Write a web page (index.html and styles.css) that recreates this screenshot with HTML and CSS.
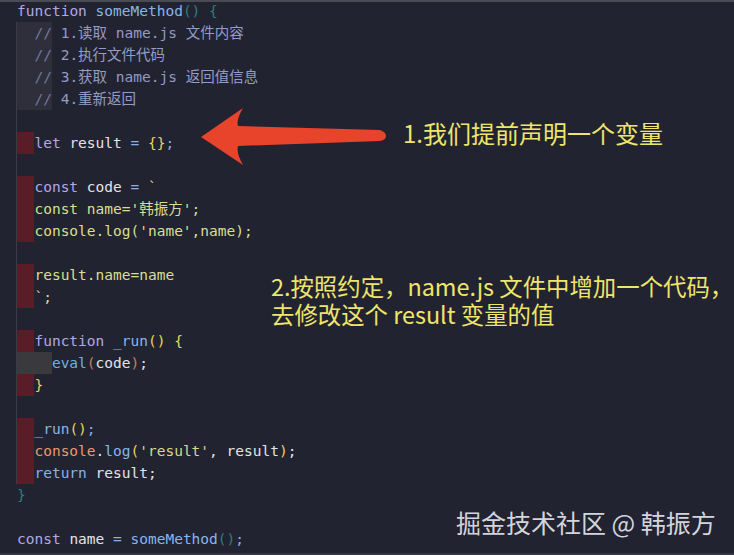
FILE: index.html
```html
<!DOCTYPE html>
<html lang="zh">
<head>
<meta charset="utf-8">
<title>someMethod</title>
<link rel="stylesheet" href="styles.css">
</head>
<body>
<div class="screen">
  <div class="code">
    <div class="line top"><span class="kw">function</span> <span class="fn">someMethod</span><span class="dim">() {</span></div>
    <div class="body">
      <div class="line"><span class="ind gray"></span><span class="cm gray">//</span><span class="ct"> 1.读取 name.js 文件内容</span></div>
      <div class="line"><span class="ind gray"></span><span class="cm gray">//</span><span class="ct"> 2.执行文件代码</span></div>
      <div class="line"><span class="ind gray"></span><span class="cm gray">//</span><span class="ct"> 3.获取 name.js 返回值信息</span></div>
      <div class="line"><span class="ind gray"></span><span class="cm gray">//</span><span class="ct"> 4.重新返回</span></div>
      <div class="line"></div>
      <div class="line"><span class="ind err"></span><span class="kw">let</span> <span class="id">result</span> <span class="op">=</span> <span class="yl">{}</span><span class="op">;</span></div>
      <div class="line"></div>
      <div class="line"><span class="ind err"></span><span class="kw">const</span> <span class="id">code</span> <span class="op">=</span> <span class="str">`</span></div>
      <div class="line"><span class="ind err"></span><span class="str">const name='韩振方';</span></div>
      <div class="line"><span class="ind err"></span><span class="str">console.log('name',name);</span></div>
      <div class="line"></div>
      <div class="line"><span class="ind err"></span><span class="str">result.name=name</span></div>
      <div class="line"><span class="ind err"></span><span class="str">`;</span></div>
      <div class="line"></div>
      <div class="line"><span class="ind err"></span><span class="kw">function</span> <span class="fn">_run</span><span class="yl">() {</span></div>
      <div class="line"><span class="ind2 grey2"></span><span class="fn2">eval</span><span class="or">(</span><span class="id">code</span><span class="or">)</span><span class="id">;</span></div>
      <div class="line"><span class="ind err"></span><span class="yl">}</span></div>
      <div class="line"></div>
      <div class="line"><span class="ind err"></span><span class="fn">_run</span><span class="yl">()</span><span class="op">;</span></div>
      <div class="line"><span class="ind err"></span><span class="cn">console</span><span class="id">.</span><span class="fn">log</span><span class="yl">(</span><span class="s2">'result'</span><span class="id">, result</span><span class="yl">)</span><span class="id">;</span></div>
      <div class="line"><span class="ind err"></span><span class="ret">return</span> <span class="id">result;</span></div>
    </div>
    <div class="line top"><span class="dim">}</span></div>
    <div class="line top"></div>
    <div class="line top"><span class="kw">const</span> <span class="id">name</span> <span class="op">=</span> <span class="fn">someMethod</span><span class="dim">()</span><span class="op">;</span></div>
  </div>

  <svg class="arrow" width="200" height="70" viewBox="0 0 200 70">
    <path d="M1 30 L43 1 Q36 13 38 19 L180 23 Q186 25 186 29 Q186 33 180 34 L38 39 Q36 46 43 58 Z" fill="#e8432b"/>
  </svg>
  <div class="note note1">1.我们提前声明一个变量</div>
  <div class="note note2">2.按照约定，name.js 文件中增加一个代码，<br>去修改这个 result 变量的值</div>
  <div class="mark">掘金技术社区 @ 韩振方</div>
  <div class="bottom-strip"></div>
</div>
</body>
</html>
```

FILE: styles.css
```css
html, body {
  margin: 0;
  padding: 0;
  background: #222331;
}
.screen {
  position: relative;
  width: 734px;
  height: 555px;
  overflow: hidden;
  background: #222331;
  border-top: 2px solid #4a4b55;
  box-sizing: border-box;
}
.code {
  font-family: "DejaVu Sans Mono", "Noto Sans CJK SC", monospace;
  font-size: 14.5px;
  color: #e2e2ea;
  margin-top: -2px;
}
.line {
  display: block;
  height: 22px;
  line-height: 22px;
  white-space: pre;
}
.top {
  padding-left: 17px;
}
.body {
  margin-left: 16px;
  border-left: 1px solid #3a3b48;
}
.ind,
.ind2 {
  display: inline-block;
  height: 22px;
  vertical-align: top;
}
.ind { width: 2ch; }
.ind2 { width: 4ch; }
.cm {
  display: inline-block;
  height: 22px;
  vertical-align: top;
}
.err { background: #5a1d28; }
.gray { background: #2e2f3a; }
.grey2 { background: #3a3a3e; }
.kw { color: #b5a6e6; }
.fn { color: #86b6ea; }
.fn2 { color: #72aee0; }
.dim { color: #2f7c7e; }
.cm { color: #6f7aa0; }
.ct { color: #939bc6; }
.id { color: #e2e2ea; }
.op { color: #8ab0e6; }
.yl { color: #ecd35a; }
.str { color: #d8df8e; }
.s2 { color: #cfdc8a; }
.or { color: #d8735f; }
.cn { color: #ea9870; }
.ret { color: #86b2ec; }

.arrow {
  position: absolute;
  left: 200px;
  top: 105px;
}
.note {
  position: absolute;
  font-family: "Noto Sans CJK SC", "Noto Sans", sans-serif;
  color: #efe56a;
  font-size: 24px;
  line-height: 28px;
  white-space: nowrap;
}
.note1 {
  left: 403px;
  top: 117px;
}
.note2 {
  left: 271px;
  top: 270px;
  font-size: 23.4px;
}
.mark {
  position: absolute;
  left: 456px;
  top: 505px;
  font-family: "Noto Sans CJK SC", "Noto Sans", sans-serif;
  font-size: 25px;
  line-height: 30px;
  color: #d4d4dc;
  white-space: nowrap;
}
.bottom-strip {
  position: absolute;
  left: 0;
  right: 0;
  bottom: 0;
  height: 2px;
  background: #353644;
}
```
